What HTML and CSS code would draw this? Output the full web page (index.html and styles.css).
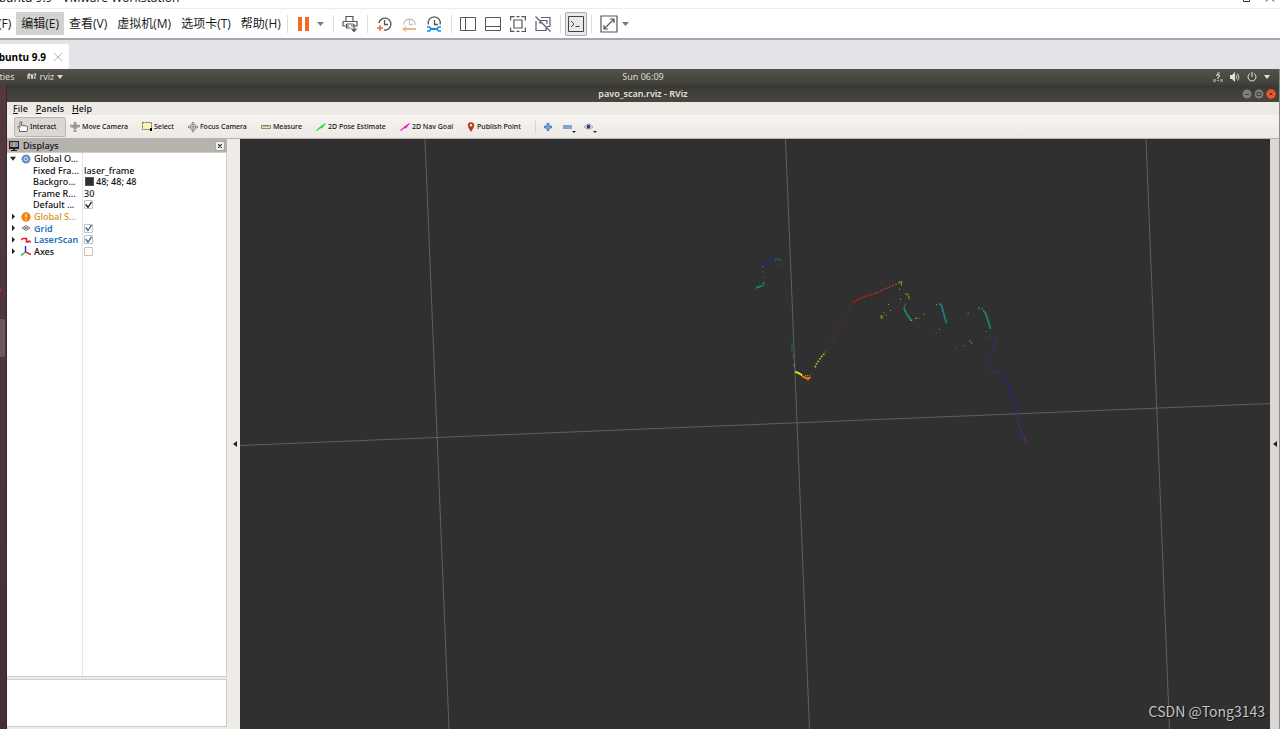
FILE: index.html
```html
<!DOCTYPE html>
<html lang="zh-CN">
<head>
<meta charset="utf-8">
<title>Ubuntu 9.9 - VMware Workstation</title>
<link rel="stylesheet" href="styles.css">
</head>
<body>
<div class="app">
  <header class="host-title">
    <span class="host-name">Ubuntu 9.9 - VMware Workstation</span>
    <svg class="host-controls" width="40" height="8" viewBox="0 0 40 8" fill="none" stroke="#333"><path d="M3.500 -4V1.500H9.500V-4M9.500 -.5H11.500V-4M26 1.500l3-3M34 1.500l-3-3"/></svg>
  </header>
  <nav class="host-menu">
    <button class="menu-item">文件(F)</button>
    <button class="menu-item active">编辑(E)</button>
    <button class="menu-item">查看(V)</button>
    <button class="menu-item">虚拟机(M)</button>
    <button class="menu-item">选项卡(T)</button>
    <button class="menu-item last">帮助(H)</button>
    <span class="host-sep"></span>
    <button class="tool pause" aria-label="Pause"><svg width="28" height="16" viewBox="0 0 28 16"><path fill="#f56a20" d="M1 1h4v14H1zM8 1h4v14H8z"/><path fill="#777" d="M20 6h7l-3.500 4z"/></svg></button>
    <span class="host-sep"></span>
    <button class="tool" aria-label="Send"><svg width="16" height="18" viewBox="0 0 16 18" fill="none" stroke="#555" stroke-width="1.200"><path d="M4 6.500V1.500h7V6.500M1 6.500h14v4.500H9M7 11H1V6.500M4.500 9h7M4.500 9v4h4M12 9v7.500M9.500 13.500L12 16.500l2.500-3"/></svg></button>
    <span class="host-sep"></span>
    <button class="tool" aria-label="Take snapshot"><svg width="16" height="18" viewBox="0 0 16 18" fill="none" stroke="#555" stroke-width="1.300"><path d="M3 8A6 6 0 1 1 8 15M8.500 5v4.500H12"/><path stroke="#f56a20" stroke-width="1.500" d="M1 13h6M4 10v6"/></svg></button>
    <button class="tool" aria-label="Revert snapshot"><svg width="16" height="18" viewBox="0 0 16 18" fill="none" stroke="#c4c4c4" stroke-width="1.300"><path d="M2.500 10A6 6 0 1 1 14.500 10M8.500 5v4.500H12"/><path fill="#f9ae8b" stroke="none" d="M1 14l4-3v2h10v2H5v2z"/></svg></button>
    <button class="tool" aria-label="Manage snapshots"><svg width="16" height="18" viewBox="0 0 16 18" fill="none" stroke="#555" stroke-width="1.300"><path d="M2.500 9.500A6 6 0 1 1 14 9.500M8.500 5v4.500H12"/><path stroke="#2089d0" stroke-width="2.200" d="M4.500 14h7"/><path stroke="#2089d0" stroke-width="1.600" d="M1 12h2.500l1.500 2-1.500 2H1M15 12h-2.500L11 14l1.500 2H15"/></svg></button>
    <span class="host-sep"></span>
    <button class="tool" aria-label="Show library"><svg width="16" height="16" viewBox="0 0 16 16" fill="none" stroke="#555"><path d="M.5 1.500h15v13H.5zM5.500 1.500v13"/></svg></button>
    <button class="tool" aria-label="Thumbnail bar"><svg width="16" height="16" viewBox="0 0 16 16" fill="none" stroke="#555"><path d="M.5 1.500h15v13H.5zM.5 10.500h15"/></svg></button>
    <button class="tool" aria-label="Full screen"><svg width="16" height="16" viewBox="0 0 16 16" fill="none" stroke="#555" stroke-width="1.200"><path d="M.6 4.500V.6h4M6.500.6h3M11.400.6h4v4M15.400 11.500v4h-4M9.500 15.400h-3M4.500 15.400H.6v-4M4 4h8v8H4z"/></svg></button>
    <button class="tool" aria-label="Unity mode"><svg width="16" height="16" viewBox="0 0 16 16" fill="none" stroke="#56616d" stroke-width="1.200"><path d="M6 1.500h9v9h-3M1 5v9.500h10v-3M5 8V4.500h7V8M.5.5l15 15"/></svg></button>
    <span class="host-sep"></span>
    <button class="tool pressed" aria-label="Console view"><svg width="16" height="16" viewBox="0 0 16 16" fill="none" stroke="#444"><path d="M.5.5h15v15H.5zM3 5l3 3-3 3M7.500 10.500h4"/></svg></button>
    <span class="host-sep"></span>
    <button class="tool stretch" aria-label="Stretch guest"><svg width="30" height="18" viewBox="0 0 30 18" fill="none" stroke="#555" stroke-width="1.200"><path d="M1 1h16v16H1zM4 14L14 4M10 4h4v4M4 10v4h4"/><path fill="#777" stroke="none" d="M22 7h7l-3.500 4z"/></svg></button>
  </nav>
  <div class="host-tabs">
    <div class="host-tab"><span>Ubuntu 9.9</span><button class="tab-close" aria-label="Close tab"><svg width="10" height="10" viewBox="0 0 10 10" stroke="#b5b5b5" fill="none"><path d="M1 1l8 8M9 1L1 9"/></svg></button></div>
  </div>
  <div class="guest">
    <div class="gnome-bar">
      <div class="gnome-left"><button class="activities">Activities</button><button class="app-menu"><svg width="10" height="8" viewBox="0 0 10 8" fill="none" stroke="#e4e2dd"><path d="M1 6V1h2v2H1l2 3M4 1l1 5 1-5M7 1h2L7 5h2"/></svg>rviz<svg width="7" height="5" viewBox="0 0 7 5"><path fill="#dedcd6" d="M0 0h6L3 4z"/></svg></button></div>
      <time class="clock">Sun 06:09</time>
      <div class="gnome-right">
        <svg width="10" height="10" viewBox="0 0 10 10"><path fill="#8b8983" d="M0 7h3v3H0zM7 7h3v3H7zM4 0h3v2H4z"/><path fill="none" stroke="#fff" d="M3.500 4q0-1.500 1.500-1.500T6.500 4Q6 5 5 5.500V7M5 8v1"/></svg>
        <svg width="10" height="10" viewBox="0 0 10 10"><path fill="#e4e2dd" d="M0 3h2l3-3v10L2 7H0z"/><path fill="none" stroke="#d0cec8" d="M6 3q2 2 0 4M7.500 1.500q3 3.500 0 7"/></svg>
        <svg width="10" height="10" viewBox="0 0 10 10" fill="none" stroke="#e4e2dd"><path d="M3 1.500a4 4 0 1 0 4 0M5 0v5"/></svg>
        <svg width="6" height="4" viewBox="0 0 6 4"><path fill="#e4e2dd" d="M0 0h6L3 4z"/></svg>
      </div>
    </div>
    <div class="desktop">
      <aside class="dock"><svg width="7" height="644" viewBox="0 0 7 644"><path fill="#d02030" d="M0 204h1v3H0z"/><rect x="-3" y="234" width="8" height="38" rx="2" fill="#6c565f"/></svg></aside>
      <main class="window">
        <div class="window-title"><h1>pavo_scan.rviz - RViz</h1>
          <div class="window-buttons">
            <button class="wb" aria-label="Minimize"><svg width="10" height="10" viewBox="0 0 10 10"><circle cx="5" cy="5" r="4.500" fill="#7f7d77"/><path stroke="#45433e" d="M3 5.500h4"/></svg></button>
            <button class="wb" aria-label="Maximize"><svg width="10" height="10" viewBox="0 0 10 10"><circle cx="5" cy="5" r="4.500" fill="#7f7d77"/><path fill="none" stroke="#45433e" d="M3 3.500h4v3H3z"/></svg></button>
            <button class="wb" aria-label="Close"><svg width="10" height="10" viewBox="0 0 10 10"><circle cx="5" cy="5" r="4.700" fill="#ee5a2c"/><path stroke="#6b2c18" d="M3.500 3.500l3 3M6.500 3.500l-3 3"/></svg></button>
          </div>
        </div>
        <nav class="rviz-menu"><button><u>F</u>ile</button><button><u>P</u>anels</button><button><u>H</u>elp</button></nav>
        <div class="toolbar">
          <button class="tb interact"><svg width="11" height="11" viewBox="0 0 11 11"><path fill="#fff" stroke="#555" stroke-width=".9" d="M2.500 10.500V8L.6 6.200l.8-.9L3 6.500V1q.8-1 1.600 0v3.500l5 .5q.8 0 .8 1v3l-.6 1.500z"/></svg>Interact</button>
          <button class="tb"><svg width="10" height="10" viewBox="0 0 10 10" fill="none" stroke="#777" stroke-width=".9"><path d="M5 0v10M0 4h10M3.500 1.500L5 0l1.500 1.500M3.500 8.500L5 10l1.500-1.500M1.500 2.500L0 4l1.500 1.500M8.500 2.500L10 4 8.500 5.500M3 3h4v3H3z"/></svg>Move Camera</button>
          <button class="tb"><svg width="10" height="9" viewBox="0 0 10 9"><path fill="#fbf6b8" stroke="#6b6545" stroke-dasharray="2 1" d="M.5.5h9v7h-9z"/><path d="M8 6h2v3H8z"/></svg>Select</button>
          <button class="tb"><svg width="10" height="10" viewBox="0 0 10 10" fill="none" stroke="#777" stroke-width=".8"><circle cx="5" cy="5" r="2.800"/><path d="M5 0v10M0 5h10M3.500 1.500L5 0l1.500 1.500M3.500 8.500L5 10l1.500-1.500M1.500 3.500L0 5l1.500 1.500M8.500 3.500L10 5 8.500 6.500"/></svg>Focus Camera</button>
          <button class="tb"><svg width="10" height="4" viewBox="0 0 10 4"><path fill="#ece2ab" stroke="#77735f" stroke-width=".8" d="M.5.5h9v3h-9zM3 0v2M5 0v2M7 0v2"/></svg>Measure</button>
          <button class="tb"><svg width="10" height="8" viewBox="0 0 10 8"><path fill="none" stroke="#1fdb34" stroke-width="1.200" d="M.5 7.500L9.500.5"/><path fill="#1fdb34" d="M3 4.500L9.500.5 6 5.500z"/></svg>2D Pose Estimate</button>
          <button class="tb"><svg width="10" height="8" viewBox="0 0 10 8"><path fill="none" stroke="#f01bc6" stroke-width="1.200" d="M.5 7.500L9.500.5"/><path fill="#f01bc6" d="M3 4.500L9.500.5 6 5.500z"/></svg>2D Nav Goal</button>
          <button class="tb"><svg width="8" height="10" viewBox="0 0 8 10"><path fill="#b23a1c" d="M4 10Q1 6 .8 3.500 1 .2 4 .2t3.200 3.300Q7 6 4 10z"/><circle cx="4" cy="3.200" r="1.200" fill="#f7e6df"/></svg>Publish Point</button>
          <span class="tb-sep"></span>
          <button class="tb-icon" aria-label="Add tool"><svg width="8" height="8" viewBox="0 0 8 8"><path fill="#7ba7dc" stroke="#3f6ead" stroke-width=".8" d="M3 .5h2V3h2.500v2H5v2.500H3V5H.5V3H3z"/></svg></button>
          <button class="tb-icon" aria-label="Remove tool"><svg width="13" height="12" viewBox="0 0 13 12"><path fill="#7ba7dc" stroke="#5582ba" stroke-width=".6" d="M.5 4.500h8v3h-8z"/><path fill="#222" d="M9 10h4l-2 2z"/></svg></button>
          <button class="tb-icon" aria-label="View options"><svg width="13" height="12" viewBox="0 0 13 12"><path fill="#e4e4ec" stroke="#888" stroke-width=".7" d="M0 6q4.500-6 9 0-4.500 4-9 0z"/><circle cx="4.500" cy="5.700" r="1.900" fill="#2f3b72"/><path fill="#222" d="M9 10h4l-2 2z"/></svg></button>
        </div>
        <div class="workspace">
          <section class="displays">
            <header class="panel-title"><svg width="10" height="10" viewBox="0 0 10 10"><path fill="#222" d="M0 0h10v8H6v1h2v1H2V9h2V8H0z"/><path fill="#d66" d="M1 1h3v5H1z"/><path fill="#7c8" d="M4 1h2v5H4z"/><path fill="#88d" d="M6 1h3v5H6z"/></svg><h2>Displays</h2><button class="panel-close" aria-label="Close panel"><svg width="4" height="4" viewBox="0 0 4 4" stroke="#333" stroke-width="1.200"><path d="M0 0l4 4M4 0L0 4"/></svg></button></header>
            <div class="tree-box">
              <div class="tree">
                <div class="row"><span class="name"><i class="arrow open"></i><svg class="ico" width="10" height="10" viewBox="0 0 10 10"><circle cx="5" cy="5" r="3.300" fill="#b2c8e5" stroke="#5684be" stroke-width="1.600"/><circle cx="5" cy="5" r="4.300" fill="none" stroke="#5684be" stroke-dasharray="1 1"/><circle cx="5" cy="5" r="1" fill="#5684be"/></svg>Global O...</span></div>
                <div class="row leaf"><span class="name">Fixed Fra...</span><span class="value">laser_frame</span></div>
                <div class="row leaf"><span class="name">Backgro...</span><span class="value"><i class="swatch"></i>48; 48; 48</span></div>
                <div class="row leaf"><span class="name">Frame R...</span><span class="value">30</span></div>
                <div class="row leaf"><label class="name" for="c1">Default ...</label><span class="value"><input class="dark" id="c1" type="checkbox" checked></span></div>
                <div class="row warn"><span class="name"><i class="arrow"></i><svg class="ico" width="10" height="10" viewBox="0 0 10 10"><circle cx="5" cy="5" r="4.700" fill="#f08410"/><path stroke="#fff" stroke-width="1.200" d="M5 2v3.500M5 6.800V8"/></svg>Global S...</span></div>
                <div class="row link"><label class="name" for="c2"><i class="arrow"></i><svg class="ico" width="10" height="10" viewBox="0 0 10 10" fill="none" stroke="#555" stroke-width=".8"><path d="M1 5l4-2.500L9 5 5 7.500zM3 3.700l4 2.600M7 3.700L3 6.300"/></svg>Grid</label><span class="value"><input id="c2" type="checkbox" checked></span></div>
                <div class="row link"><label class="name" for="c3"><i class="arrow"></i><svg class="ico" width="10" height="10" viewBox="0 0 10 10" fill="none" stroke="#e01820" stroke-width="1.500"><path d="M0 5l2-1.500H5.500V7H7l1-1 2 1.500"/></svg>LaserScan</label><span class="value"><input id="c3" type="checkbox" checked></span></div>
                <div class="row"><label class="name" for="c4"><i class="arrow"></i><svg class="ico" width="10" height="10" viewBox="0 0 10 10" fill="none" stroke-width="1.400"><path stroke="#2424e8" d="M4.500 0v6"/><path stroke="#18c430" d="M4.500 6L0 9.500"/><path stroke="#ee2020" d="M4.500 6L10 8.500"/></svg>Axes</label><span class="value"><input id="c4" type="checkbox"></span></div>
              </div>
            </div>
            <div class="help-box"></div>
          </section>
          <button class="splitter" aria-label="Collapse left panel"><svg width="4" height="6" viewBox="0 0 4 6"><path fill="#222" d="M4 0v6L0 3z"/></svg></button>
          <svg class="scene" viewBox="240 139 1030 590" preserveAspectRatio="xMinYMin slice" fill="none">
            <path stroke="#606060" d="M240 445.500L1270 403.500M425 139L449 729M785.500 139L809.500 729M1146 139L1169.500 729"/>
            <g transform="translate(740 240) scale(.333333)" stroke-width="4">
              <path stroke="#251bc0" stroke-dasharray="6 2" d="M69 71l9-3 15-3 10-7"/>
              <path stroke="#14809c" stroke-dasharray="4 3" d="M105 59l8-2 10 5M68 76v4"/>
              <path stroke="#14745c" d="M123 76h3M68 95h3M70 113h3"/>
              <path stroke="#1a9473" stroke-dasharray="5 2" d="M48 144l8-2 8-3 6-5 2-10M50 141l12-3"/>
              <path stroke="#174b87" d="M132 125h3M137 178h3M150 277h3M151 294h3"/>
              <path stroke="#28208b" d="M143 217h3M147 248h3"/>
              <path stroke="#147c7c" stroke-dasharray="3 3" d="M156 312v20M160 342v16"/>
              <path stroke="#e2d615" stroke-width="6" d="M165 395l10 4 12 7"/>
              <path stroke="#df7812" stroke-width="6" d="M186 409l16 6 10-3M198 415h6v6"/>
              <path stroke="#bca614" stroke-dasharray="3 3" d="M163 373v8M195 407h18"/>
              <path stroke="#b0bd1c" stroke-width="5" stroke-dasharray="5 4" d="M225 382l4-10 15-21 12-14"/>
              <path stroke="#922e18" stroke-dasharray="4 4" d="M215 402h3M250 341l11-12"/>
              <path stroke="#9e211c" stroke-dasharray="4 14" d="M269 312l13-22 20-37"/>
              <path stroke="#9e211c" stroke-dasharray="3 9" d="M305 243l15-24 20-30"/>
              <path stroke="#b82020" stroke-dasharray="7 2" d="M340 187l12-8 20-8 20-7 18-5"/>
              <path stroke="#a34620" stroke-dasharray="6 4" d="M410 159l20-10 25-11 23-9"/>
              <path stroke="#ac9d1d" stroke-dasharray="4 2" d="M476 126h13M484 130v7M496 162l8 2 4 13"/>
              <path stroke="#9e911d" d="M477 148h3M480 178h3M444 193h3M450 211h3M430 217h3M437 225h3M588 194h3M683 220h3M550 223h3"/>
              <path stroke="#8d911b" stroke-width="5" stroke-dasharray="4 3" d="M421 231h9M425 226v10"/>
              <path stroke="#748222" stroke-dasharray="3 3" d="M495 191v10"/>
              <path stroke="#18a368" stroke-width="5" stroke-dasharray="7 1" d="M492 203l4 12 11 17 6 9"/>
              <path stroke="#879b1c" stroke-dasharray="6 4" d="M511 241h10M526 235h12"/>
              <path stroke="#168e98" stroke-width="5" stroke-dasharray="5 1" d="M598 191l7 6 5 19 5 20 5 14"/>
              <path stroke="#8b3021" d="M580 281h4M588 279h4M646 323h4M668 317h8"/>
              <path stroke="#718421" d="M597 268h3M687 303h4M693 309h4"/>
              <path stroke="#209c3d" stroke-dasharray="5 2" d="M714 204h5M725 207h4"/>
              <path stroke="#16948d" stroke-width="5" stroke-dasharray="5 1" d="M730 212l7 8 6 18 9 29"/>
              <path stroke="#176f90" d="M737 274h3M747 289h3"/>
              <path stroke="#4a209e" stroke-dasharray="4 3" d="M768 281l-3 9v25l-4 15-8 8-14 17-1 8 9 18 12 15 24 3"/>
              <path stroke="#3219b8" stroke-dasharray="5 3" d="M784 403l10 15 13 27 12 29 8 28 7 22"/>
              <path stroke="#5b1bac" stroke-dasharray="6 3" d="M833 535l5 24 8 22 6 12"/>
              <path stroke="#8f19a8" stroke-dasharray="4 2" d="M854 595l5 14"/>
            </g>
          </svg>
          <button class="splitter right" aria-label="Collapse right panel"><svg width="4" height="6" viewBox="0 0 4 6"><path fill="#222" d="M4 0v6L0 3z"/></svg></button>
          <span class="watermark">CSDN @Tong3143</span>
        </div>
      </main>
    </div>
  </div>
</div>
</body>
</html>
```
FILE: styles.css
```css
* { box-sizing: border-box; }
body { margin: 0; background: #fff; overflow: hidden; }
.app {
  height: 100vh;
  display: flex;
  flex-direction: column;
  overflow: hidden;
  font-family: "Noto Sans", sans-serif;
  font-size: 9px;
  line-height: 12px;
  color: #222;
}
button {
  margin: 0; padding: 0; border: 0;
  background: none; color: inherit;
  font: inherit; white-space: nowrap;
}
svg { display: block; flex: none; }
h1, h2 { margin: 0; font-size: 9px; line-height: 12px; }

.host-title {
  height: 9px; flex: none;
  display: flex; justify-content: space-between; align-items: flex-end;
  padding-bottom: 2px;
  overflow: hidden;
  border-bottom: 1px solid #ececec;
  font: 12px/16px "Open Sans", sans-serif;
  color: #111;
}
.host-name { margin-left: -10px; white-space: nowrap; }
.host-controls { margin-bottom: -2px; }
.host-menu {
  height: 31px; flex: none;
  display: flex; align-items: center;
  border-bottom: 2px solid #a6a7a8;
  font: 12px/23px "Open Sans", "Noto Sans CJK SC", sans-serif;
  color: #1a1a1a;
}
.menu-item { padding: 0 5px; height: 23px; flex: none; }
.menu-item:first-child { margin-left: -31px; }
.menu-item.last { padding-right: 2px; }
.menu-item.active { background: #d1d1d1; }
.host-sep { width: 1px; height: 18px; margin: 0 4px; background: #ddd; flex: none; }
.tool { height: 24px; padding: 0 5px 0 4px; flex: none; display: flex; align-items: center; }
.tool.pause { padding: 0 4px 0 5px; }
.tool.pressed { padding: 0 2px; background: #e9e9e9; border: 1px solid #aaa; border-radius: 2px; }

.host-tabs {
  height: 29px; flex: none;
  display: flex; align-items: flex-end;
  background: #e2e4e7;
}
.host-tab {
  height: 25px; margin-left: -20px; padding: 0 6px 0 0;
  width: 89px;
  display: flex; align-items: center; justify-content: flex-end; gap: 7px;
  background: #fff; border-radius: 3px;
  font: bold 10px/16px "Open Sans", sans-serif;
  color: #000; white-space: nowrap;
}

.guest {
  flex: 1; min-height: 0;
  display: flex; flex-direction: column;
  border-right: 1px solid #8a8986;
}
.gnome-bar {
  height: 16px; flex: none;
  display: grid; grid-template-columns: 1fr auto 1fr; align-items: center;
  background: linear-gradient(#55524a, #403f3a);
  color: #dedcd6;
}
.gnome-left { display: flex; align-items: center; gap: 12px; }
.activities { margin-left: -23px; }
.app-menu { display: flex; align-items: center; gap: 3px; }
.clock { padding-left: 7px; }
.gnome-right { display: flex; align-items: center; justify-content: flex-end; gap: 7px; padding-right: 9px; }
.desktop { flex: 1; min-height: 0; display: flex; }
.dock { width: 7px; flex: none; overflow: hidden; background: linear-gradient(#54383e, #4a343e 60%, #432f36); border-right: 1px solid #342a2c; }
.window { flex: 1; min-width: 0; display: flex; flex-direction: column; }
.window-title {
  height: 17px; flex: none;
  display: grid; grid-template-columns: 1fr auto 1fr; align-items: center;
  background: linear-gradient(#393833, #47463f);
  color: #e6e3dc;
}
.window-title h1 { grid-column: 2; font-weight: 600; }
.window-buttons { display: flex; justify-content: flex-end; gap: 2px; padding-right: 3px; }
.rviz-menu {
  height: 13px; flex: none;
  display: flex; gap: 8px; padding-left: 6px;
  background: #edeae5; color: #111;
  font-weight: 500;
}
.toolbar {
  height: 24px; flex: none;
  display: flex; align-items: center;
  padding-left: 7px;
  background: linear-gradient(#f6f4f0, #ede9e4);
  border-bottom: 1px solid #b8b3ac;
  font-size: 7px; font-weight: 500;
  color: #111;
}
.tb { height: 20px; padding: 0 7px; flex: none; display: flex; align-items: center; gap: 2px; }
.tb.interact { width: 52px; margin-right: -3px; padding: 0 9px 0 2px; border: 1px solid #bbb5af; border-radius: 2px; background: #dbd7d3; }
.tb-sep { width: 1px; height: 12px; margin: 0 8px 0 7px; background: #d8d4cf; }
.tb-icon { display: flex; align-items: center; margin-right: 8px; padding-left: 0; }
.tb-icon + .tb-icon { padding-left: 3px; margin-right: 5px; }

.workspace { flex: 1; min-height: 0; display: flex; position: relative; background: #efece7; }
.displays { width: 220px; flex: none; display: flex; flex-direction: column; }
.panel-title {
  height: 13px; flex: none;
  display: flex; align-items: center; gap: 4px; padding: 0 2px;
  background: #b6b2ae;
}
.panel-title h2 { flex: 1; font-weight: 500; color: #111; }
.panel-close { width: 10px; height: 10px; display: grid; place-items: center; background: #f1efec; border: 1px solid #aaa6a2; border-radius: 2px; }
.tree-box {
  flex: 1; min-height: 0;
  border: 1px solid #d0cdc9; border-left: 0;
  background: linear-gradient(#e4e4e4, #e4e4e4) 75px 0 / 1px 100% no-repeat #fff;
}
.tree { height: 104px; display: grid; grid-template-rows: repeat(9, 1fr); color: #111; font-weight: 500; }
.row { display: grid; grid-template-columns: 77px 1fr; align-items: center; min-height: 0; line-height: 11px; }
.name { display: flex; align-items: center; padding-left: 3px; white-space: nowrap; }
.leaf .name { padding-left: 26px; }
.value { display: flex; align-items: center; gap: 2px; }
.ico { margin: 0 3px 0 4px; }
.arrow { width: 7px; height: 6px; flex: none; background: #222; clip-path: polygon(2px 0, 5px 3px, 2px 6px); }
.arrow.open { clip-path: polygon(0 1px, 6px 1px, 3px 5px); }
.warn { color: #d49125; }
.link { color: #1c6dbd; font-weight: 600; }
.swatch { width: 9px; height: 9px; margin-left: 1px; background: #303030; border: 1px solid #555; }
input[type="checkbox"] {
  appearance: none; margin: 0; width: 9px; height: 9px;
  display: grid; place-items: center;
  background: #fff; border: 1px solid #c4c1bd; border-radius: 1px;
  color: #1c62aa;
}
input.dark { color: #111; }
input:checked::before { content: ""; width: 7px; height: 7px; background: currentColor; clip-path: polygon(0 3px, 2px 3px, 3px 5px, 6px 0, 7px 1px, 3px 7px); }
.help-box { height: 48px; flex: none; margin: 2px 0; background: #fff; border: 1px solid #d0cdc9; border-left: 0; }
.splitter { width: 13px; flex: none; display: grid; align-items: center; justify-content: end; padding: 20px 3px 0 0; background: #efece7; }
.splitter.right { width: 9px; padding-right: 2px; background: #dbd7d4; }
.scene { flex: 1; min-width: 0; width: 0; height: 100%; background: #303030; }
.watermark {
  position: absolute; right: 14px; bottom: 8px;
  font: 14px/20px "Noto Sans CJK SC", sans-serif;
  color: #c4c4c4; text-shadow: 1px 1px 1px #111;
}
```
